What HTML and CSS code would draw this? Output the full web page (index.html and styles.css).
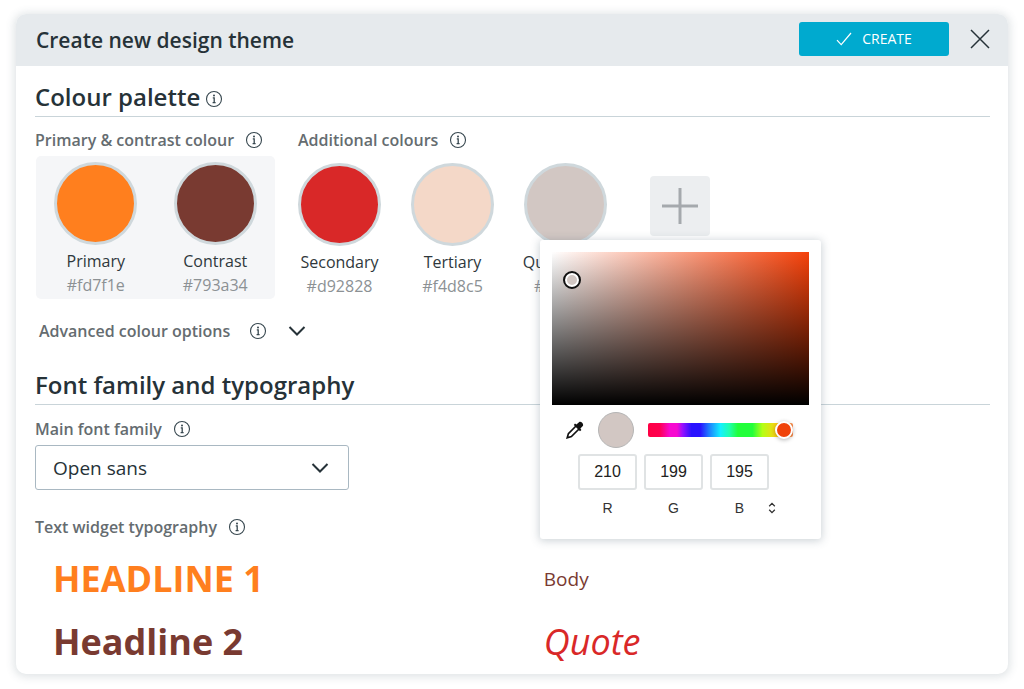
FILE: index.html
```
<!DOCTYPE html>
<html lang="en">
<head>
    <meta charset="UTF-8">
    <meta name="viewport" content="width=device-width, initial-scale=1">
    <title>Create new design theme</title>
    <link rel="stylesheet" href="styles.css">
</head>
<body>
<!-- shared icons -->
<svg class="sprite" aria-hidden="true">
    <symbol id="info" viewBox="0 0 18 18">
        <circle cx="9" cy="9" r="7.5" fill="none" stroke="currentColor" stroke-width="1.1"/>
        <circle cx="9" cy="5.4" r="1" fill="currentColor"/>
        <path d="M7.8 7.8H9.2V12.4M7.6 12.6H10.6" fill="none" stroke="currentColor" stroke-width="1.3"/>
    </symbol>
    <symbol id="chevron" viewBox="0 0 18 18">
        <path d="M1.5 5L9 12.5L16.5 5" fill="none" stroke="currentColor" stroke-width="2"/>
    </symbol>
</svg>

<main class="dialog">
    <header class="dialog-header">
        <h1>Create new design theme</h1>
        <button type="button" class="create">
            <svg width="16" height="14" viewBox="0 0 16 14"><path d="M1 8.2L5.2 12.6L15 1" fill="none" stroke="currentColor" stroke-width="1.2"/></svg>
            CREATE
        </button>
        <button type="button" class="close" aria-label="Close">
            <svg width="20" height="20" viewBox="0 0 20 20"><path d="M1 1L19 19M19 1L1 19" stroke="currentColor" stroke-width="1.5"/></svg>
        </button>
    </header>

    <div class="dialog-body">
        <h2>Colour palette <svg class="info"><use href="#info"/></svg></h2>

        <div class="palette">
            <section>
                <h3>Primary &amp; contrast colour <svg class="info"><use href="#info"/></svg></h3>
                <div class="main-colours">
                    <div class="swatch">
                        <button type="button" class="dot primary" aria-label="Primary"></button>
                        <span>Primary</span>
                        <span class="hex">#fd7f1e</span>
                    </div>
                    <div class="swatch">
                        <button type="button" class="dot contrast" aria-label="Contrast"></button>
                        <span>Contrast</span>
                        <span class="hex">#793a34</span>
                    </div>
                </div>
            </section>

            <section>
                <h3>Additional colours <svg class="info"><use href="#info"/></svg></h3>
                <div class="more-colours">
                    <div class="swatch">
                        <button type="button" class="dot secondary" aria-label="Secondary"></button>
                        <span>Secondary</span>
                        <span class="hex">#d92828</span>
                    </div>
                    <div class="swatch">
                        <button type="button" class="dot tertiary" aria-label="Tertiary"></button>
                        <span>Tertiary</span>
                        <span class="hex">#f4d8c5</span>
                    </div>
                    <div class="swatch">
                        <button type="button" class="dot quaternary" aria-label="Quaternary"></button>
                        <span>Quaternary</span>
                        <span class="hex">#d2c7c3</span>

                        <!-- colour picker, opens over the swatch -->
                        <div class="picker">
                            <div class="shade"><span class="shade-handle"></span></div>
                            <div class="picker-row">
                                <button type="button" class="dropper" aria-label="Pick from screen">
                                    <svg width="18" height="18" viewBox="0 0 18 18">
                                        <path d="M10 5L2.4 12.6L1.2 16.8L5.4 15.6L13 8" fill="none" stroke="currentColor" stroke-width="1.7"/>
                                        <path d="M9 2.6L10.4 3.6L13 1.2C15 -0.2 18.2 3 16.8 5L14.4 7.6L15.4 9L14 10.2L7.8 4Z" fill="currentColor"/>
                                    </svg>
                                </button>
                                <span class="preview"></span>
                                <input type="range" class="hue" min="0" max="360" value="0" dir="rtl" aria-label="Hue">
                            </div>
                            <div class="rgb">
                                <div class="channel"><input type="text" id="r" value="210"><label for="r">R</label></div>
                                <div class="channel"><input type="text" id="g" value="199"><label for="g">G</label></div>
                                <div class="channel"><input type="text" id="b" value="195"><label for="b">B</label></div>
                                <button type="button" class="mode" aria-label="Change colour format">
                                    <svg width="8" height="12" viewBox="0 0 8 12"><path d="M1.2 4.2L4 1.4L6.8 4.2M1.2 7.8L4 10.6L6.8 7.8" fill="none" stroke="currentColor" stroke-width="1.3"/></svg>
                                </button>
                            </div>
                        </div>
                    </div>
                    <button type="button" class="add" aria-label="Add colour">
                        <svg width="36" height="36" viewBox="0 0 36 36"><path d="M18 0V36M0 18H36" stroke="currentColor" stroke-width="3"/></svg>
                    </button>
                </div>
            </section>
        </div>

        <button type="button" class="advanced">
            Advanced colour options
            <svg class="info"><use href="#info"/></svg>
            <svg class="chevron"><use href="#chevron"/></svg>
        </button>

        <h2>Font family and typography</h2>

        <div class="field-label">
            <label for="font">Main font family</label>
            <svg class="info"><use href="#info"/></svg>
        </div>
        <div class="select">
            <select id="font">
                <option>Open sans</option>
                <option>Roboto</option>
                <option>Lato</option>
            </select>
            <svg class="chevron"><use href="#chevron"/></svg>
        </div>

        <h3>Text widget typography <svg class="info"><use href="#info"/></svg></h3>
        <div class="samples">
            <p class="headline1">HEADLINE 1</p>
            <p class="body-text">Body</p>
            <p class="headline2">Headline 2</p>
            <p class="quote">Quote</p>
        </div>
    </div>
</main>
</body>
</html>
```
FILE: styles.css
```
* {
    box-sizing: border-box;
}
body {
    margin: 0;
    padding: 14px 16px 15px;
    background: #fff;
    color: #263238;
    font-family: "Open Sans", "Liberation Sans", sans-serif;
}
h1, h2, h3, p {
    margin: 0;
}
button {
    padding: 0;
    border: 0;
    background: none;
    color: inherit;
    font: inherit;
    cursor: pointer;
}
svg {
    flex: none;
}
.sprite {
    position: absolute;
    width: 0;
    height: 0;
}

/* dialog */
.dialog {
    border-radius: 10px;
    background: #fff;
    box-shadow: 0 1px 8px 2px rgba(60, 85, 100, 0.16);
}
.dialog-header {
    display: flex;
    align-items: center;
    height: 52px;
    padding: 0 18px 2px 20px;
    border-radius: 10px 10px 0 0;
    background: #e6eaed;
}
.dialog-header h1 {
    flex: 1;
    padding-top: 2px;
    font-size: 21px;
    font-weight: 600;
}
.create {
    display: flex;
    align-items: center;
    justify-content: center;
    gap: 10px;
    width: 150px;
    height: 34px;
    padding-bottom: 1px;
    border-radius: 3px;
    background: #00aacf;
    color: #fff;
    font-size: 14px;
}
.close {
    display: flex;
    margin-left: 21px;
}
.dialog-body {
    padding: 12px 18px 0 19px;
}

/* headings */
h2 {
    display: flex;
    align-items: center;
    gap: 5px;
    height: 39px;
    padding-bottom: 1px;
    border-bottom: 1px solid #c9d4d9;
    font-size: 24px;
    font-weight: 600;
}
h2 .info {
    margin-top: 4px;
}
h3, .field-label, .advanced {
    display: flex;
    align-items: center;
    gap: 11px;
    color: #656c70;
    font-size: 16px;
    font-weight: 600;
    line-height: 24px;
}
.info {
    width: 18px;
    height: 18px;
    color: #37474f;
}
.chevron {
    width: 18px;
    height: 18px;
    color: #263238;
}

/* palette */
.palette {
    display: flex;
    gap: 23px;
    padding: 11px 0 0;
}
.main-colours {
    display: grid;
    grid-template-columns: 1fr 1fr;
    width: 239px;
    margin: 4px 0 0 1px;
    padding: 6px 0 2px;
    border-radius: 5px;
    background: #f5f6f8;
}
.more-colours {
    display: flex;
    gap: 30px;
    padding-top: 11px;
}
.swatch {
    position: relative;
    display: flex;
    flex-direction: column;
    align-items: center;
    color: #2f383c;
    font-size: 16px;
    line-height: 24px;
}
.more-colours .swatch {
    width: 83px;
}
.dot {
    width: 83px;
    height: 83px;
    margin-bottom: 4px;
    border: 3px solid #cfd8dc;
    border-radius: 50%;
}
.primary { background: #ff7f1e; }
.contrast { background: #793a31; }
.secondary { background: #d92828; }
.tertiary { background: #f4d8c8; }
.quaternary { background: #d2c7c3; }
.hex {
    color: #8c9194;
}
.add {
    display: flex;
    align-items: center;
    justify-content: center;
    width: 60px;
    height: 60px;
    margin: 13px 0 0 13px;
    border-radius: 4px;
    background: #eceef0;
    color: #a5a9ad;
}
.advanced {
    margin: 20px 0 23px 4px;
}
.advanced .info {
    margin-left: 8px;
}
.advanced .chevron {
    margin-left: 10px;
}

/* colour picker */
.picker {
    position: absolute;
    top: 77px;
    left: 16px;
    z-index: 1;
    width: 281px;
    height: 299px;
    padding: 12px;
    border-radius: 3px;
    background: #fff;
    box-shadow: 0 1px 8px 1px rgba(60, 85, 100, 0.25);
    color: #333;
    font-family: "Liberation Sans", Arial, sans-serif;
}
.shade {
    position: relative;
    height: 153px;
    background:
        linear-gradient(to top, #000, transparent),
        linear-gradient(to right, #fff, #f5410a);
}
.shade-handle {
    position: absolute;
    top: 19px;
    left: 11px;
    width: 18px;
    height: 18px;
    border: 2px solid #111;
    border-radius: 50%;
    background: #d2c7c3;
    box-shadow: inset 0 0 0 2px #fff;
}
.picker-row {
    display: flex;
    align-items: center;
    height: 49px;
    padding-left: 14px;
}
.dropper {
    display: flex;
    color: #111;
}
.preview {
    width: 36px;
    height: 36px;
    margin: 0 14px;
    border: 1px solid #b5b5b5;
    border-radius: 50%;
    background: #d2c7c3;
}
.hue {
    width: 145px;
    height: 14px;
    margin: 0;
    border-radius: 2px;
    background: linear-gradient(to right, #ff0044, #ff0050 8%, #f70ad0 15%, #f70ad0 20%, #9412ff 24%, #2a12ff 30%, #2a12ff 36%, #1f7cff 42%, #14f0ff 50%, #1fffb0 56%, #22ff3a 62%, #22ff3a 72%, #b4ff14 79%, #ffcf14 89%, #ff8a50);
    appearance: none;
}
.hue::-webkit-slider-thumb {
    width: 18px;
    height: 18px;
    border: 2px solid #fff;
    border-radius: 50%;
    background: #f0430b;
    box-shadow: 0 1px 4px rgba(0, 0, 0, 0.3);
    appearance: none;
}
.rgb {
    display: flex;
    gap: 7px;
    padding-left: 26px;
}
.channel {
    display: flex;
    flex-direction: column;
    align-items: center;
    width: 59px;
}
.channel input {
    width: 100%;
    height: 36px;
    border: 2px solid #e0e3e4;
    border-radius: 3px;
    color: #222;
    font: 16px "Liberation Sans", Arial, sans-serif;
    text-align: center;
}
.channel label {
    padding-top: 8px;
    font-size: 14px;
    line-height: 20px;
}
.mode {
    display: flex;
    align-items: center;
    align-self: flex-end;
    height: 20px;
    margin-left: -8px;
}

/* typography */
.field-label {
    margin: 12px 0 4px;
}
.select {
    position: relative;
    width: 314px;
    margin-bottom: 25px;
}
.select select {
    display: block;
    width: 100%;
    height: 45px;
    padding: 0 17px;
    border: 1px solid #a9b8c2;
    border-radius: 3px;
    background: #fff;
    color: #263238;
    font: 19px "Open Sans", "Liberation Sans", sans-serif;
    appearance: none;
}
.select .chevron {
    position: absolute;
    top: 14px;
    right: 20px;
    pointer-events: none;
}
.samples {
    display: grid;
    grid-template-columns: 11fr 10fr;
    align-items: center;
    grid-auto-rows: 63px;
    padding: 8px 0 1px 18px;
}
.headline1, .headline2 {
    font-size: 36px;
    font-weight: 700;
}
.headline1 { color: #ff7f1e; }
.headline2 { color: #793a31; }
.body-text {
    color: #793a31;
    font-size: 19px;
}
.quote {
    color: #d92828;
    font-size: 36px;
    font-style: italic;
}
```
